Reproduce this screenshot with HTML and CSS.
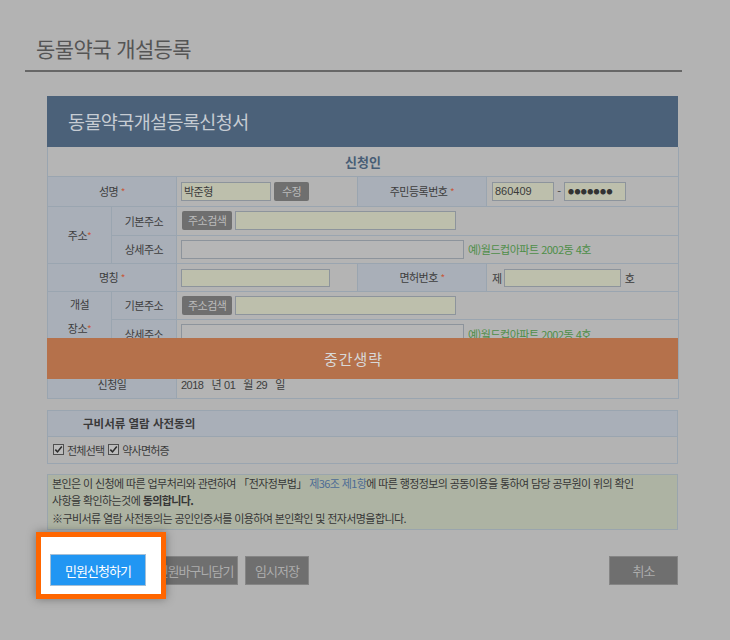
FILE: index.html
```html
<!DOCTYPE html>
<html lang="ko">
<head>
<meta charset="utf-8">
<title>동물약국 개설등록</title>
<link rel="stylesheet" href="styles.css">
</head>
<body>
<div class="page">
  <h1 class="page-title">동물약국 개설등록</h1>

  <div class="form">
    <div class="form-head">동물약국개설등록신청서</div>

    <div class="table-wrap">
      <table class="grid">
        <colgroup>
          <col class="c1"><col class="c2"><col class="c3"><col class="c4"><col class="c5">
        </colgroup>
        <tr class="r29">
          <th colspan="5" class="sec">신청인</th>
        </tr>
        <tr class="r30">
          <th colspan="2" class="lbl">성명 <i class="req">*</i></th>
          <td><span class="inp filled w-name">박준형</span><span class="mini-btn">수정</span></td>
          <th class="lbl">주민등록번호 <i class="req">*</i></th>
          <td><span class="inp filled w-rrn">860409</span><span class="dash">-</span><span class="inp filled w-rrn2 dots">●●●●●●●</span></td>
        </tr>
        <tr class="r29">
          <th rowspan="2" class="lbl">주소<i class="req">*</i></th>
          <th class="lbl">기본주소</th>
          <td colspan="3"><span class="mini-btn first">주소검색</span><span class="inp filled w-addr"></span></td>
        </tr>
        <tr class="r28">
          <th class="lbl">상세주소</th>
          <td colspan="3"><span class="inp w-detail"></span><span class="hint">예)월드컵아파트 2002동 4호</span></td>
        </tr>
        <tr class="r28">
          <th colspan="2" class="lbl">명칭 <i class="req">*</i></th>
          <td><span class="inp filled w-title"></span></td>
          <th class="lbl">면허번호 <i class="req">*</i></th>
          <td><span class="pre">제</span><span class="inp filled w-lic"></span><span class="post">호</span></td>
        </tr>
        <tr class="r28">
          <th rowspan="3" class="lbl multi">개설<br>장소<i class="req">*</i></th>
          <th class="lbl">기본주소</th>
          <td colspan="3"><span class="mini-btn first">주소검색</span><span class="inp filled w-addr"></span></td>
        </tr>
        <tr class="r29">
          <th class="lbl">상세주소</th>
          <td colspan="3"><span class="inp w-detail"></span><span class="hint">예)월드컵아파트 2002동 4호</span></td>
        </tr>
        <tr class="r22">
          <th class="lbl"></th>
          <td colspan="3"></td>
        </tr>
        <tr class="r28">
          <th colspan="2" class="lbl">신청일</th>
          <td colspan="3" class="date">2018<span class="u">년</span>01<span class="u">월</span>29<span class="u">일</span></td>
        </tr>
      </table>
      <div class="skip-band">중간생략</div>
    </div>

    <div class="consent">
      <div class="consent-head">구비서류 열람 사전동의</div>
      <div class="consent-body">
        <label class="chk">
          <svg class="box" width="11" height="11" viewBox="0 0 11 11" aria-hidden="true">
            <rect x="0.5" y="0.5" width="10" height="10" fill="#bdbdbd" stroke="#505050"/>
            <path d="M2.3 5.6 L4.5 7.9 L8.8 2.6" fill="none" stroke="#2e2e2e" stroke-width="1.6"/>
          </svg>전체선택</label>
        <label class="chk">
          <svg class="box" width="11" height="11" viewBox="0 0 11 11" aria-hidden="true">
            <rect x="0.5" y="0.5" width="10" height="10" fill="#bdbdbd" stroke="#505050"/>
            <path d="M2.3 5.6 L4.5 7.9 L8.8 2.6" fill="none" stroke="#2e2e2e" stroke-width="1.6"/>
          </svg>약사면허증</label>
      </div>
    </div>

    <div class="notice">
      <p>본인은 이 신청에 따른 업무처리와 관련하여 「전자정부법」 <span class="law">제36조 제1항</span>에 따른 행정정보의 공동이용을 통하여 담당 공무원이 위의 확인<br>사항을 확인하는것에 <b>동의합니다.</b><br>※구비서류 열람 사전동의는 공인인증서를 이용하여 본인확인 및 전자서명을합니다.</p>
    </div>

    <div class="actions">
      <div class="spotlight"></div>
      <button class="btn btn-primary" type="button">민원신청하기</button>
      <button class="btn w-cart" type="button">민원바구니담기</button>
      <button class="btn w-temp" type="button">임시저장</button>
      <button class="btn btn-cancel" type="button">취소</button>
    </div>
  </div>
</div>
</body>
</html>
```

FILE: styles.css
```css
html {
  background: #b3b3b3;
}

body {
  margin: 0;
  min-height: 640px;
  background: #b3b3b3;
  font-family: "Noto Sans CJK KR", "Noto Sans", sans-serif;
  color: #3c3c3c;
}

.page {
  width: 657px;
  margin-left: 25px;
  padding-bottom: 50px;
}

.page-title {
  margin: 0;
  padding: 36px 0 10px 11px;
  font-size: 21px;
  line-height: 24px;
  font-weight: 400;
  letter-spacing: -0.6px;
  color: #555555;
  border-bottom: 2px solid #676767;
}

.form {
  margin: 24px 4px 0 22px;
}

.form-head {
  height: 51px;
  line-height: 51px;
  padding-left: 21px;
  background: #4b6179;
  color: #c6ccd3;
  font-size: 18.5px;
  letter-spacing: -0.6px;
}

.table-wrap {
  position: relative;
}

.grid {
  width: 631px;
  border-collapse: collapse;
  table-layout: fixed;
}

.c1 { width: 64px; }
.c2 { width: 65px; }
.c3 { width: 181px; }
.c4 { width: 129px; }
.c5 { width: 192px; }

.r22 { height: 22px; }
.r28 { height: 28px; }
.r29 { height: 29px; }
.r30 { height: 30px; }

.grid th,
.grid td {
  border: 1px solid #9aa5b0;
  padding: 0 4px;
  font-size: 11px;
  letter-spacing: -0.5px;
  white-space: nowrap;
  vertical-align: middle;
}

.grid tr:first-child th {
  border-top: none;
}

.grid td {
  background: #b4b4b4;
  text-align: left;
}

.grid th.lbl {
  background: #a9afb8;
  color: #3d3d3d;
  font-weight: 400;
  text-align: center;
}

.grid th.multi {
  vertical-align: top;
  padding-top: 0;
  line-height: 24px;
}

.grid th.sec {
  background: #b5b5b5;
  color: #475d75;
  font-size: 13px;
  font-weight: 700;
  letter-spacing: 0;
  text-align: center;
}

.req {
  font-style: normal;
  font-size: 10px;
  color: #c65a3d;
}

.inp {
  display: inline-block;
  box-sizing: border-box;
  height: 19px;
  line-height: 17px;
  padding: 0 2px;
  border: 1px solid #8d949c;
  background: #b6b6b6;
  color: #3a3a3a;
  vertical-align: middle;
  font-size: 11px;
}

.inp.filled {
  background: #bdbfac;
}

.w-name { width: 90px; }
.w-rrn { width: 62px; margin-left: 1px; font-family: "Liberation Sans", sans-serif; letter-spacing: 0; }
.w-rrn2 { width: 62px; }
.w-addr { width: 221px; margin-left: 3px; }
.w-detail { width: 283px; }
.w-title { width: 149px; height: 18px; }
.w-lic { width: 117px; height: 18px; margin-left: 2px; }

.dots {
  font-size: 6px;
  letter-spacing: 0.4px;
  color: #333;
  padding-left: 3px;
}

.dash {
  display: inline-block;
  width: 10px;
  text-align: center;
  vertical-align: middle;
}

.mini-btn {
  display: inline-block;
  height: 19px;
  line-height: 19px;
  padding: 0 8px;
  margin-left: 3px;
  border-radius: 2px;
  background: #6f6f6f;
  color: #bcbcbc;
  vertical-align: middle;
  font-size: 11px;
}

.mini-btn.first {
  margin-left: 1px;
  padding: 0 6px;
}

.hint {
  margin-left: 4px;
  color: #4e8e48;
  vertical-align: middle;
}

.pre {
  margin-left: 1px;
  vertical-align: middle;
}

.post {
  margin-left: 4px;
  vertical-align: middle;
}

.date {
  font-family: "Liberation Sans", "Noto Sans CJK KR", sans-serif;
}

.date .u {
  margin: 0 3px 0 8px;
  font-family: "Noto Sans CJK KR", sans-serif;
}

.skip-band {
  position: absolute;
  left: 0;
  right: 0;
  top: 191px;
  height: 41px;
  line-height: 41px;
  padding-right: 18px;
  background: #b5714b;
  color: #d8d8d8;
  font-size: 15px;
  letter-spacing: 1px;
  text-align: center;
}

.consent {
  margin-top: 11px;
  border: 1px solid #9aa5b0;
}

.consent-head {
  height: 25px;
  line-height: 25px;
  padding-left: 35px;
  background: #a9afb8;
  border-bottom: 1px solid #9aa5b0;
  color: #3a3a3a;
  font-size: 11.5px;
  font-weight: 700;
}

.consent-body {
  display: flex;
  align-items: center;
  gap: 4px;
  height: 26px;
  padding-left: 5px;
  font-size: 11px;
  letter-spacing: -0.8px;
}

.chk {
  display: flex;
  align-items: center;
  gap: 3px;
}

.notice {
  margin-top: 10px;
  border: 1px solid #9aa5ad;
  background: #adb3a3;
  padding: 0 4px 2px;
}

.notice p {
  margin: 0;
  font-size: 11px;
  line-height: 17.5px;
  letter-spacing: -0.6px;
  color: #363636;
}

.law {
  color: #4e6c95;
}

.actions {
  position: relative;
  display: flex;
  align-items: center;
  gap: 6px;
  margin-top: 24px;
  padding-left: 3px;
}

.spotlight {
  position: absolute;
  left: -11px;
  top: -22px;
  box-sizing: border-box;
  width: 130px;
  height: 67px;
  border: 5px solid #ff6600;
  background: #ffffff;
  box-shadow: 0 0 9px rgba(0, 0, 0, 0.35);
  z-index: 1;
}

.btn {
  box-sizing: border-box;
  height: 29px;
  padding: 0;
  border: 1px solid #858585;
  background: #6f6f6f;
  color: #acacac;
  font-family: inherit;
  font-size: 13px;
  letter-spacing: -1px;
}

.btn-primary {
  position: relative;
  z-index: 2;
  width: 96px;
  height: 32px;
  background: #2196f3;
  color: #ffffff;
  border: 1px solid #a5bfd6;
}

.w-cart { width: 86px; }
.w-temp { width: 64px; margin-left: 1px; }

.btn-cancel {
  width: 69px;
  margin-left: auto;
}
```
